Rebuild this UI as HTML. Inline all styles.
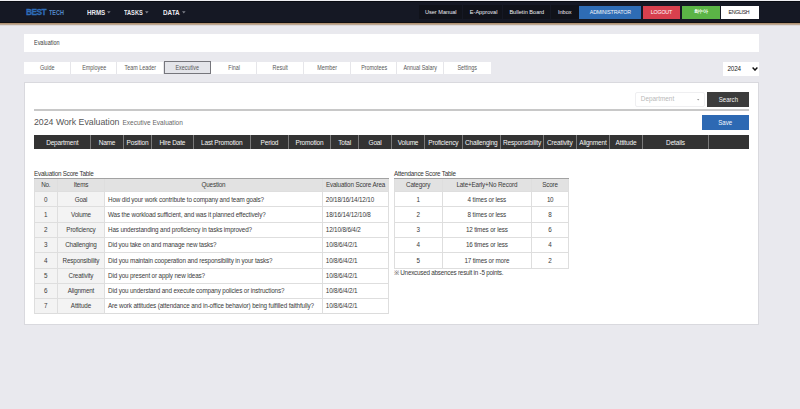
<!DOCTYPE html>
<html><head><meta charset="utf-8">
<style>
*{box-sizing:border-box;margin:0;padding:0}
html,body{width:800px;height:409px;overflow:hidden}
body{background:#e9e9ee;font-family:"Liberation Sans",sans-serif;position:relative}
.t{position:absolute;line-height:1;white-space:nowrap}
.r{position:absolute}
</style></head><body>
<div class="r" style="left:0px;top:0px;width:800px;height:1px;background:#eeeef2;"></div>
<div class="r" style="left:0px;top:1px;width:800px;height:1px;background:#090b12;"></div>
<div class="r" style="left:0px;top:2px;width:800px;height:20px;background:#151824;"></div>
<div class="r" style="left:0px;top:22px;width:800px;height:1px;background:#0f0e12;"></div>
<div class="r" style="left:0px;top:23px;width:800px;height:1px;background:#b29373;"></div>
<div class="r" style="left:0px;top:24px;width:800px;height:1px;background:#bba793;"></div>
<div class="r" style="left:0px;top:25px;width:800px;height:1px;background:#dcd9da;"></div>
<div class="t" style="left:25.70px;top:7px;font-size:9.5px;color:#2e6cb8;font-weight:bold;letter-spacing:-0.6px;transform:scaleX(0.88);transform-origin:0 0;-webkit-text-stroke:0.3px #2e6cb8;">BEST</div>
<div class="t" style="left:49.30px;top:10px;font-size:6.6px;color:#5288c8;font-weight:bold;transform:scaleX(0.83);transform-origin:0 0;">TECH</div>
<div class="t" style="left:86.70px;top:10px;font-size:6.9px;color:#e9e9f0;font-weight:bold;transform:scaleX(0.9);transform-origin:0 0;">HRMS</div>
<svg class="r" style="left:106.9px;top:11px" width="4" height="3" viewBox="0 0 4 3"><path d="M0 0.2 H3.6 L1.8 2.4 Z" fill="#7c7f88"/></svg>
<div class="t" style="left:124.40px;top:10px;font-size:6.9px;color:#e9e9f0;font-weight:bold;transform:scaleX(0.82);transform-origin:0 0;">TASKS</div>
<svg class="r" style="left:145.0px;top:11px" width="4" height="3" viewBox="0 0 4 3"><path d="M0 0.2 H3.6 L1.8 2.4 Z" fill="#7c7f88"/></svg>
<div class="t" style="left:163.20px;top:10px;font-size:6.9px;color:#e9e9f0;font-weight:bold;transform:scaleX(0.92);transform-origin:0 0;">DATA</div>
<svg class="r" style="left:181.89999999999998px;top:11px" width="4" height="3" viewBox="0 0 4 3"><path d="M0 0.2 H3.6 L1.8 2.4 Z" fill="#7c7f88"/></svg>
<div class="r" style="left:419.3px;top:4.5px;width:43px;height:14px;background:#10121a;"></div>
<div class="r" style="left:463.4px;top:4.5px;width:38.4px;height:14px;background:#10121a;"></div>
<div class="r" style="left:502.8px;top:4.5px;width:47px;height:14px;background:#10121a;"></div>
<div class="r" style="left:550.6px;top:4.5px;width:28px;height:14px;background:#10121a;"></div>
<div class="t" style="left:424.90px;top:10px;font-size:5.6px;color:#ececf2;">User Manual</div>
<div class="t" style="left:469.80px;top:10px;font-size:5.6px;color:#ececf2;">E-Approval</div>
<div class="t" style="left:509.40px;top:10px;font-size:5.6px;color:#ececf2;">Bulletin Board</div>
<div class="t" style="left:557.90px;top:10px;font-size:5.6px;color:#ececf2;">Inbox</div>
<div class="r" style="left:579.3px;top:5.8px;width:62px;height:13px;background:#2e6cb5;"></div>
<div class="t" style="left:579.30px;top:10px;font-size:5.3px;color:#f4f6fb;width:62.00px;text-align:center;letter-spacing:-0.18px;">ADMINISTRATOR</div>
<div class="r" style="left:642.7px;top:5.8px;width:37.5px;height:13px;background:#d8404e;"></div>
<div class="t" style="left:642.70px;top:10px;font-size:5.3px;color:#fff;width:37.50px;text-align:center;letter-spacing:-0.18px;">LOGOUT</div>
<div class="r" style="left:681.8px;top:5.8px;width:38px;height:13px;background:#5bb446;"></div>
<div class="t" style="left:681.80px;top:8.5px;font-size:5.4px;color:#f2fbef;font-weight:bold;width:38.00px;text-align:center;letter-spacing:-0.2px;">회수아</div>
<div class="r" style="left:721.2px;top:5.8px;width:37.8px;height:13px;background:#ffffff;"></div>
<div class="t" style="left:721.20px;top:10px;font-size:5.3px;color:#222;width:37.80px;text-align:center;letter-spacing:-0.35px;margin-left:-1.2px;">ENGLISH</div>
<div class="r" style="left:24px;top:34px;width:734.5px;height:17.5px;background:#fff;"></div>
<div class="t" style="left:33.90px;top:40px;font-size:6.3px;color:#3a3a3a;transform:scaleX(0.8651);transform-origin:0 0;">Evaluation</div>
<div class="r" style="left:24px;top:61.5px;width:466.70000000000005px;height:12.6px;background:#fff;"></div>
<div class="r" style="left:70px;top:61.5px;width:1px;height:12.6px;background:#e6e6ea;"></div>
<div class="r" style="left:116px;top:61.5px;width:1px;height:12.6px;background:#e6e6ea;"></div>
<div class="r" style="left:163px;top:61.5px;width:1px;height:12.6px;background:#e6e6ea;"></div>
<div class="r" style="left:210px;top:61.5px;width:1px;height:12.6px;background:#e6e6ea;"></div>
<div class="r" style="left:256px;top:61.5px;width:1px;height:12.6px;background:#e6e6ea;"></div>
<div class="r" style="left:303px;top:61.5px;width:1px;height:12.6px;background:#e6e6ea;"></div>
<div class="r" style="left:350px;top:61.5px;width:1px;height:12.6px;background:#e6e6ea;"></div>
<div class="r" style="left:396px;top:61.5px;width:1px;height:12.6px;background:#e6e6ea;"></div>
<div class="r" style="left:443px;top:61.5px;width:1px;height:12.6px;background:#e6e6ea;"></div>
<div class="r" style="left:164px;top:61.2px;width:46.9px;height:13px;background:#e4e5ea;border:1px solid #76767c"></div>
<div class="t" style="left:20.11px;top:65px;font-size:6.3px;color:#585858;width:54.45px;text-align:center;transform:scaleX(0.8571);transform-origin:50% 0;">Guide</div>
<div class="t" style="left:66.78px;top:65px;font-size:6.3px;color:#585858;width:54.45px;text-align:center;transform:scaleX(0.8571);transform-origin:50% 0;">Employee</div>
<div class="t" style="left:113.45px;top:65px;font-size:6.3px;color:#585858;width:54.45px;text-align:center;transform:scaleX(0.8571);transform-origin:50% 0;">Team Leader</div>
<div class="t" style="left:160.12px;top:65px;font-size:6.3px;color:#585858;width:54.45px;text-align:center;transform:scaleX(0.8571);transform-origin:50% 0;">Executive</div>
<div class="t" style="left:206.79px;top:65px;font-size:6.3px;color:#585858;width:54.45px;text-align:center;transform:scaleX(0.8571);transform-origin:50% 0;">Final</div>
<div class="t" style="left:253.46px;top:65px;font-size:6.3px;color:#585858;width:54.45px;text-align:center;transform:scaleX(0.8571);transform-origin:50% 0;">Result</div>
<div class="t" style="left:300.13px;top:65px;font-size:6.3px;color:#585858;width:54.45px;text-align:center;transform:scaleX(0.8571);transform-origin:50% 0;">Member</div>
<div class="t" style="left:346.80px;top:65px;font-size:6.3px;color:#585858;width:54.45px;text-align:center;transform:scaleX(0.8571);transform-origin:50% 0;">Promotees</div>
<div class="t" style="left:393.47px;top:65px;font-size:6.3px;color:#585858;width:54.45px;text-align:center;transform:scaleX(0.8571);transform-origin:50% 0;">Annual Salary</div>
<div class="t" style="left:440.14px;top:65px;font-size:6.3px;color:#585858;width:54.45px;text-align:center;transform:scaleX(0.8571);transform-origin:50% 0;">Settings</div>
<div class="r" style="left:723px;top:62px;width:35.5px;height:13.5px;background:#fff;"></div>
<div class="t" style="left:727.50px;top:66px;font-size:6.3px;color:#222;letter-spacing:-0.151px;">2024</div>
<svg class="r" style="left:752px;top:66.5px" width="6" height="4" viewBox="0 0 6 4"><path d="M0.6 0.6 L3 3.1 L5.4 0.6" stroke="#111" stroke-width="1.4" fill="none"/></svg>
<div class="r" style="left:24px;top:82px;width:734.5px;height:242.5px;background:#fff;border:1px solid #d9d9de"></div>
<div class="r" style="left:634.5px;top:92.2px;width:70.7px;height:14.8px;background:#fff;border:1px solid #efeff1;border-radius:2px"></div>
<div class="t" style="left:640.80px;top:96px;font-size:6.4px;color:#b9b9b9;">Department</div>
<svg class="r" style="left:696.8px;top:99.2px" width="3" height="2" viewBox="0 0 3 2"><path d="M0 0 H2.4 L1.2 1.4 Z" fill="#9a9a9a"/></svg>
<div class="r" style="left:707px;top:92px;width:42px;height:14.8px;background:#3c3c3c;"></div>
<div class="t" style="left:704.59px;top:97px;font-size:6.8px;color:#f4f4f4;width:46.82px;text-align:center;transform:scaleX(0.8971);transform-origin:50% 0;">Search</div>
<div class="r" style="left:34px;top:109px;width:715px;height:2px;background:#c8c8c8;"></div>
<div class="t" style="left:34.00px;top:117.5px;font-size:8.75px;color:#555;">2024 Work Evaluation</div>
<div class="t" style="left:122.50px;top:119.5px;font-size:6.5px;color:#666;">Executive Evaluation</div>
<div class="r" style="left:702px;top:115px;width:47px;height:15px;background:#2d69b3;"></div>
<div class="t" style="left:699.30px;top:120px;font-size:6.8px;color:#f6f8fc;width:52.39px;text-align:center;transform:scaleX(0.8971);transform-origin:50% 0;">Save</div>
<div class="r" style="left:34px;top:135.4px;width:715px;height:13.3px;background:#333;"></div>
<div class="r" style="left:90.0px;top:135.4px;width:1px;height:13.3px;background:#7a7a7a;"></div>
<div class="r" style="left:122.8px;top:135.4px;width:1px;height:13.3px;background:#7a7a7a;"></div>
<div class="r" style="left:151.1px;top:135.4px;width:1px;height:13.3px;background:#7a7a7a;"></div>
<div class="r" style="left:192.6px;top:135.4px;width:1px;height:13.3px;background:#7a7a7a;"></div>
<div class="r" style="left:250.0px;top:135.4px;width:1px;height:13.3px;background:#7a7a7a;"></div>
<div class="r" style="left:287.9px;top:135.4px;width:1px;height:13.3px;background:#7a7a7a;"></div>
<div class="r" style="left:330.1px;top:135.4px;width:1px;height:13.3px;background:#7a7a7a;"></div>
<div class="r" style="left:358.1px;top:135.4px;width:1px;height:13.3px;background:#7a7a7a;"></div>
<div class="r" style="left:391.0px;top:135.4px;width:1px;height:13.3px;background:#7a7a7a;"></div>
<div class="r" style="left:424.1px;top:135.4px;width:1px;height:13.3px;background:#7a7a7a;"></div>
<div class="r" style="left:461.5px;top:135.4px;width:1px;height:13.3px;background:#7a7a7a;"></div>
<div class="r" style="left:500.1px;top:135.4px;width:1px;height:13.3px;background:#7a7a7a;"></div>
<div class="r" style="left:542.9px;top:135.4px;width:1px;height:13.3px;background:#7a7a7a;"></div>
<div class="r" style="left:575.7px;top:135.4px;width:1px;height:13.3px;background:#7a7a7a;"></div>
<div class="r" style="left:609.1px;top:135.4px;width:1px;height:13.3px;background:#7a7a7a;"></div>
<div class="r" style="left:641.9px;top:135.4px;width:1px;height:13.3px;background:#7a7a7a;"></div>
<div class="r" style="left:708.1px;top:135.4px;width:1px;height:13.3px;background:#7a7a7a;"></div>
<div class="t" style="left:34.00px;top:140px;font-size:6.5px;color:#f5f5f5;width:56.50px;text-align:center;letter-spacing:-0.186px;">Department</div>
<div class="t" style="left:90.50px;top:140px;font-size:6.5px;color:#f5f5f5;width:32.80px;text-align:center;letter-spacing:-0.285px;">Name</div>
<div class="t" style="left:123.30px;top:140px;font-size:6.5px;color:#f5f5f5;width:28.30px;text-align:center;letter-spacing:-0.163px;">Position</div>
<div class="t" style="left:151.60px;top:140px;font-size:6.5px;color:#f5f5f5;width:41.50px;text-align:center;letter-spacing:-0.169px;">Hire Date</div>
<div class="t" style="left:193.10px;top:140px;font-size:6.5px;color:#f5f5f5;width:57.40px;text-align:center;letter-spacing:-0.166px;">Last Promotion</div>
<div class="t" style="left:250.50px;top:140px;font-size:6.5px;color:#f5f5f5;width:37.90px;text-align:center;letter-spacing:-0.185px;">Period</div>
<div class="t" style="left:288.40px;top:140px;font-size:6.5px;color:#f5f5f5;width:42.20px;text-align:center;letter-spacing:-0.182px;">Promotion</div>
<div class="t" style="left:330.60px;top:140px;font-size:6.5px;color:#f5f5f5;width:28.00px;text-align:center;letter-spacing:-0.169px;">Total</div>
<div class="t" style="left:358.60px;top:140px;font-size:6.5px;color:#f5f5f5;width:32.90px;text-align:center;letter-spacing:-0.225px;">Goal</div>
<div class="t" style="left:391.50px;top:140px;font-size:6.5px;color:#f5f5f5;width:33.10px;text-align:center;letter-spacing:-0.213px;">Volume</div>
<div class="t" style="left:424.60px;top:140px;font-size:6.5px;color:#f5f5f5;width:37.40px;text-align:center;letter-spacing:-0.156px;">Proficiency</div>
<div class="t" style="left:462.00px;top:140px;font-size:6.5px;color:#f5f5f5;width:38.60px;text-align:center;letter-spacing:-0.169px;">Challenging</div>
<div class="t" style="left:500.60px;top:140px;font-size:6.5px;color:#f5f5f5;width:42.80px;text-align:center;letter-spacing:-0.152px;">Responsibility</div>
<div class="t" style="left:543.40px;top:140px;font-size:6.5px;color:#f5f5f5;width:32.80px;text-align:center;letter-spacing:-0.148px;">Creativity</div>
<div class="t" style="left:576.20px;top:140px;font-size:6.5px;color:#f5f5f5;width:33.40px;text-align:center;letter-spacing:-0.178px;">Alignment</div>
<div class="t" style="left:609.60px;top:140px;font-size:6.5px;color:#f5f5f5;width:32.80px;text-align:center;letter-spacing:-0.155px;">Attitude</div>
<div class="t" style="left:642.40px;top:140px;font-size:6.5px;color:#f5f5f5;width:66.20px;text-align:center;letter-spacing:-0.163px;">Details</div>
<div class="t" style="left:34.00px;top:170.6px;font-size:6.3px;color:#333;letter-spacing:-0.221px;">Evaluation Score Table</div>
<div class="r" style="left:34px;top:178px;width:354.5px;height:13.599999999999994px;background:#e2e2e2;"></div>
<div class="r" style="left:34px;top:191.6px;width:70.4px;height:122.29999999999998px;background:#f3f3f3;"></div>
<div class="r" style="left:34px;top:191.1px;width:354.5px;height:1px;background:#dedede;"></div>
<div class="r" style="left:34px;top:206.4px;width:354.5px;height:1px;background:#dedede;"></div>
<div class="r" style="left:34px;top:221.7px;width:354.5px;height:1px;background:#dedede;"></div>
<div class="r" style="left:34px;top:237.0px;width:354.5px;height:1px;background:#dedede;"></div>
<div class="r" style="left:34px;top:252.2px;width:354.5px;height:1px;background:#dedede;"></div>
<div class="r" style="left:34px;top:267.5px;width:354.5px;height:1px;background:#dedede;"></div>
<div class="r" style="left:34px;top:282.8px;width:354.5px;height:1px;background:#dedede;"></div>
<div class="r" style="left:34px;top:298.1px;width:354.5px;height:1px;background:#dedede;"></div>
<div class="r" style="left:34px;top:313.4px;width:354.5px;height:1px;background:#dcdcdc;"></div>
<div class="r" style="left:33.5px;top:178px;width:1px;height:135.89999999999998px;background:#dedede;"></div>
<div class="r" style="left:57.0px;top:178px;width:1px;height:135.89999999999998px;background:#dedede;"></div>
<div class="r" style="left:103.9px;top:178px;width:1px;height:135.89999999999998px;background:#dedede;"></div>
<div class="r" style="left:322.0px;top:178px;width:1px;height:135.89999999999998px;background:#dedede;"></div>
<div class="r" style="left:388.0px;top:178px;width:1px;height:135.89999999999998px;background:#dedede;"></div>
<div class="r" style="left:33.5px;top:177.7px;width:355.5px;height:1.4px;background:#a2a2a2;"></div>
<div class="t" style="left:34.00px;top:182px;font-size:6.3px;color:#3a3a3a;width:23.50px;text-align:center;letter-spacing:-0.231px;">No.</div>
<div class="t" style="left:57.50px;top:182px;font-size:6.3px;color:#3a3a3a;width:46.90px;text-align:center;letter-spacing:-0.181px;">Items</div>
<div class="t" style="left:104.40px;top:182px;font-size:6.3px;color:#3a3a3a;width:218.10px;text-align:center;letter-spacing:-0.17px;">Question</div>
<div class="t" style="left:322.50px;top:182px;font-size:6.3px;color:#3a3a3a;width:66.00px;text-align:center;letter-spacing:-0.148px;">Evaluation Score Area</div>
<div class="t" style="left:34.00px;top:196.6px;font-size:6.3px;color:#3a3a3a;width:23.50px;text-align:center;">0</div>
<div class="t" style="left:57.50px;top:196.6px;font-size:6.3px;color:#3a3a3a;width:46.90px;text-align:center;letter-spacing:-0.209px;">Goal</div>
<div class="t" style="left:108.00px;top:196.6px;font-size:6.3px;color:#3a3a3a;letter-spacing:-0.143px;">How did your work contribute to company and team goals?</div>
<div class="t" style="left:325.80px;top:196.6px;font-size:6.3px;color:#3a3a3a;letter-spacing:-0.15px;">20/18/16/14/12/10</div>
<div class="t" style="left:34.00px;top:211.87px;font-size:6.3px;color:#3a3a3a;width:23.50px;text-align:center;">1</div>
<div class="t" style="left:57.50px;top:211.87px;font-size:6.3px;color:#3a3a3a;width:46.90px;text-align:center;letter-spacing:-0.198px;">Volume</div>
<div class="t" style="left:108.00px;top:211.87px;font-size:6.3px;color:#3a3a3a;letter-spacing:-0.132px;">Was the workload sufficient, and was it planned effectively?</div>
<div class="t" style="left:325.80px;top:211.87px;font-size:6.3px;color:#3a3a3a;letter-spacing:-0.149px;">18/16/14/12/10/8</div>
<div class="t" style="left:34.00px;top:227.14px;font-size:6.3px;color:#3a3a3a;width:23.50px;text-align:center;">2</div>
<div class="t" style="left:57.50px;top:227.14px;font-size:6.3px;color:#3a3a3a;width:46.90px;text-align:center;letter-spacing:-0.145px;">Proficiency</div>
<div class="t" style="left:108.00px;top:227.14px;font-size:6.3px;color:#3a3a3a;letter-spacing:-0.14px;">Has understanding and proficiency in tasks improved?</div>
<div class="t" style="left:325.80px;top:227.14px;font-size:6.3px;color:#3a3a3a;letter-spacing:-0.144px;">12/10/8/6/4/2</div>
<div class="t" style="left:34.00px;top:242.41px;font-size:6.3px;color:#3a3a3a;width:23.50px;text-align:center;">3</div>
<div class="t" style="left:57.50px;top:242.41px;font-size:6.3px;color:#3a3a3a;width:46.90px;text-align:center;letter-spacing:-0.157px;">Challenging</div>
<div class="t" style="left:108.00px;top:242.41px;font-size:6.3px;color:#3a3a3a;letter-spacing:-0.149px;">Did you take on and manage new tasks?</div>
<div class="t" style="left:325.80px;top:242.41px;font-size:6.3px;color:#3a3a3a;letter-spacing:-0.143px;">10/8/6/4/2/1</div>
<div class="t" style="left:34.00px;top:257.68px;font-size:6.3px;color:#3a3a3a;width:23.50px;text-align:center;">4</div>
<div class="t" style="left:57.50px;top:257.68px;font-size:6.3px;color:#3a3a3a;width:46.90px;text-align:center;letter-spacing:-0.141px;">Responsibility</div>
<div class="t" style="left:108.00px;top:257.68px;font-size:6.3px;color:#3a3a3a;letter-spacing:-0.133px;">Did you maintain cooperation and responsibility in your tasks?</div>
<div class="t" style="left:325.80px;top:257.68px;font-size:6.3px;color:#3a3a3a;letter-spacing:-0.143px;">10/8/6/4/2/1</div>
<div class="t" style="left:34.00px;top:272.95px;font-size:6.3px;color:#3a3a3a;width:23.50px;text-align:center;">5</div>
<div class="t" style="left:57.50px;top:272.95px;font-size:6.3px;color:#3a3a3a;width:46.90px;text-align:center;letter-spacing:-0.137px;">Creativity</div>
<div class="t" style="left:108.00px;top:272.95px;font-size:6.3px;color:#3a3a3a;letter-spacing:-0.141px;">Did you present or apply new ideas?</div>
<div class="t" style="left:325.80px;top:272.95px;font-size:6.3px;color:#3a3a3a;letter-spacing:-0.143px;">10/8/6/4/2/1</div>
<div class="t" style="left:34.00px;top:288.22px;font-size:6.3px;color:#3a3a3a;width:23.50px;text-align:center;">6</div>
<div class="t" style="left:57.50px;top:288.22px;font-size:6.3px;color:#3a3a3a;width:46.90px;text-align:center;letter-spacing:-0.165px;">Alignment</div>
<div class="t" style="left:108.00px;top:288.22px;font-size:6.3px;color:#3a3a3a;letter-spacing:-0.139px;">Did you understand and execute company policies or instructions?</div>
<div class="t" style="left:325.80px;top:288.22px;font-size:6.3px;color:#3a3a3a;letter-spacing:-0.143px;">10/8/6/4/2/1</div>
<div class="t" style="left:34.00px;top:303.49px;font-size:6.3px;color:#3a3a3a;width:23.50px;text-align:center;">7</div>
<div class="t" style="left:57.50px;top:303.49px;font-size:6.3px;color:#3a3a3a;width:46.90px;text-align:center;letter-spacing:-0.144px;">Attitude</div>
<div class="t" style="left:108.00px;top:303.49px;font-size:6.3px;color:#3a3a3a;letter-spacing:-0.126px;">Are work attitudes (attendance and in-office behavior) being fulfilled faithfully?</div>
<div class="t" style="left:325.80px;top:303.49px;font-size:6.3px;color:#3a3a3a;letter-spacing:-0.143px;">10/8/6/4/2/1</div>
<div class="t" style="left:394.00px;top:170.6px;font-size:6.3px;color:#333;letter-spacing:-0.229px;">Attendance Score Table</div>
<div class="r" style="left:394px;top:178px;width:174.79999999999995px;height:13.599999999999994px;background:#e2e2e2;"></div>
<div class="r" style="left:394px;top:191.1px;width:174.79999999999995px;height:1px;background:#dedede;"></div>
<div class="r" style="left:394px;top:206.4px;width:174.79999999999995px;height:1px;background:#dedede;"></div>
<div class="r" style="left:394px;top:221.7px;width:174.79999999999995px;height:1px;background:#dedede;"></div>
<div class="r" style="left:394px;top:237.0px;width:174.79999999999995px;height:1px;background:#dedede;"></div>
<div class="r" style="left:394px;top:252.2px;width:174.79999999999995px;height:1px;background:#dedede;"></div>
<div class="r" style="left:394px;top:267.5px;width:174.79999999999995px;height:1px;background:#dedede;"></div>
<div class="r" style="left:393.5px;top:178px;width:1px;height:90px;background:#dedede;"></div>
<div class="r" style="left:441.8px;top:178px;width:1px;height:90px;background:#dedede;"></div>
<div class="r" style="left:530.9px;top:178px;width:1px;height:90px;background:#dedede;"></div>
<div class="r" style="left:568.3px;top:178px;width:1px;height:90px;background:#dedede;"></div>
<div class="r" style="left:393.5px;top:177.7px;width:175.79999999999995px;height:1.4px;background:#a2a2a2;"></div>
<div class="t" style="left:394.00px;top:182px;font-size:6.3px;color:#3a3a3a;width:48.30px;text-align:center;letter-spacing:-0.172px;">Category</div>
<div class="t" style="left:442.30px;top:182px;font-size:6.3px;color:#3a3a3a;width:89.10px;text-align:center;letter-spacing:-0.159px;">Late+Early+No Record</div>
<div class="t" style="left:531.40px;top:182px;font-size:6.3px;color:#3a3a3a;width:37.40px;text-align:center;letter-spacing:-0.194px;">Score</div>
<div class="t" style="left:394.00px;top:196.6px;font-size:6.3px;color:#3a3a3a;width:48.30px;text-align:center;">1</div>
<div class="t" style="left:442.30px;top:196.6px;font-size:6.3px;color:#3a3a3a;width:89.10px;text-align:center;letter-spacing:-0.137px;">4 times or less</div>
<div class="t" style="left:531.40px;top:196.6px;font-size:6.3px;color:#3a3a3a;width:37.40px;text-align:center;letter-spacing:-0.33px;">10</div>
<div class="t" style="left:394.00px;top:211.87px;font-size:6.3px;color:#3a3a3a;width:48.30px;text-align:center;">2</div>
<div class="t" style="left:442.30px;top:211.87px;font-size:6.3px;color:#3a3a3a;width:89.10px;text-align:center;letter-spacing:-0.137px;">8 times or less</div>
<div class="t" style="left:531.40px;top:211.87px;font-size:6.3px;color:#3a3a3a;width:37.40px;text-align:center;">8</div>
<div class="t" style="left:394.00px;top:227.14px;font-size:6.3px;color:#3a3a3a;width:48.30px;text-align:center;">3</div>
<div class="t" style="left:442.30px;top:227.14px;font-size:6.3px;color:#3a3a3a;width:89.10px;text-align:center;letter-spacing:-0.139px;">12 times or less</div>
<div class="t" style="left:531.40px;top:227.14px;font-size:6.3px;color:#3a3a3a;width:37.40px;text-align:center;">6</div>
<div class="t" style="left:394.00px;top:242.41px;font-size:6.3px;color:#3a3a3a;width:48.30px;text-align:center;">4</div>
<div class="t" style="left:442.30px;top:242.41px;font-size:6.3px;color:#3a3a3a;width:89.10px;text-align:center;letter-spacing:-0.139px;">16 times or less</div>
<div class="t" style="left:531.40px;top:242.41px;font-size:6.3px;color:#3a3a3a;width:37.40px;text-align:center;">4</div>
<div class="t" style="left:394.00px;top:257.68px;font-size:6.3px;color:#3a3a3a;width:48.30px;text-align:center;">5</div>
<div class="t" style="left:442.30px;top:257.68px;font-size:6.3px;color:#3a3a3a;width:89.10px;text-align:center;letter-spacing:-0.148px;">17 times or more</div>
<div class="t" style="left:531.40px;top:257.68px;font-size:6.3px;color:#3a3a3a;width:37.40px;text-align:center;">2</div>
<div class="t" style="left:394.00px;top:269.8px;font-size:6.3px;color:#3a3a3a;letter-spacing:-0.225px;">※ Unexcused absences result in -5 points.</div>
</body></html>
